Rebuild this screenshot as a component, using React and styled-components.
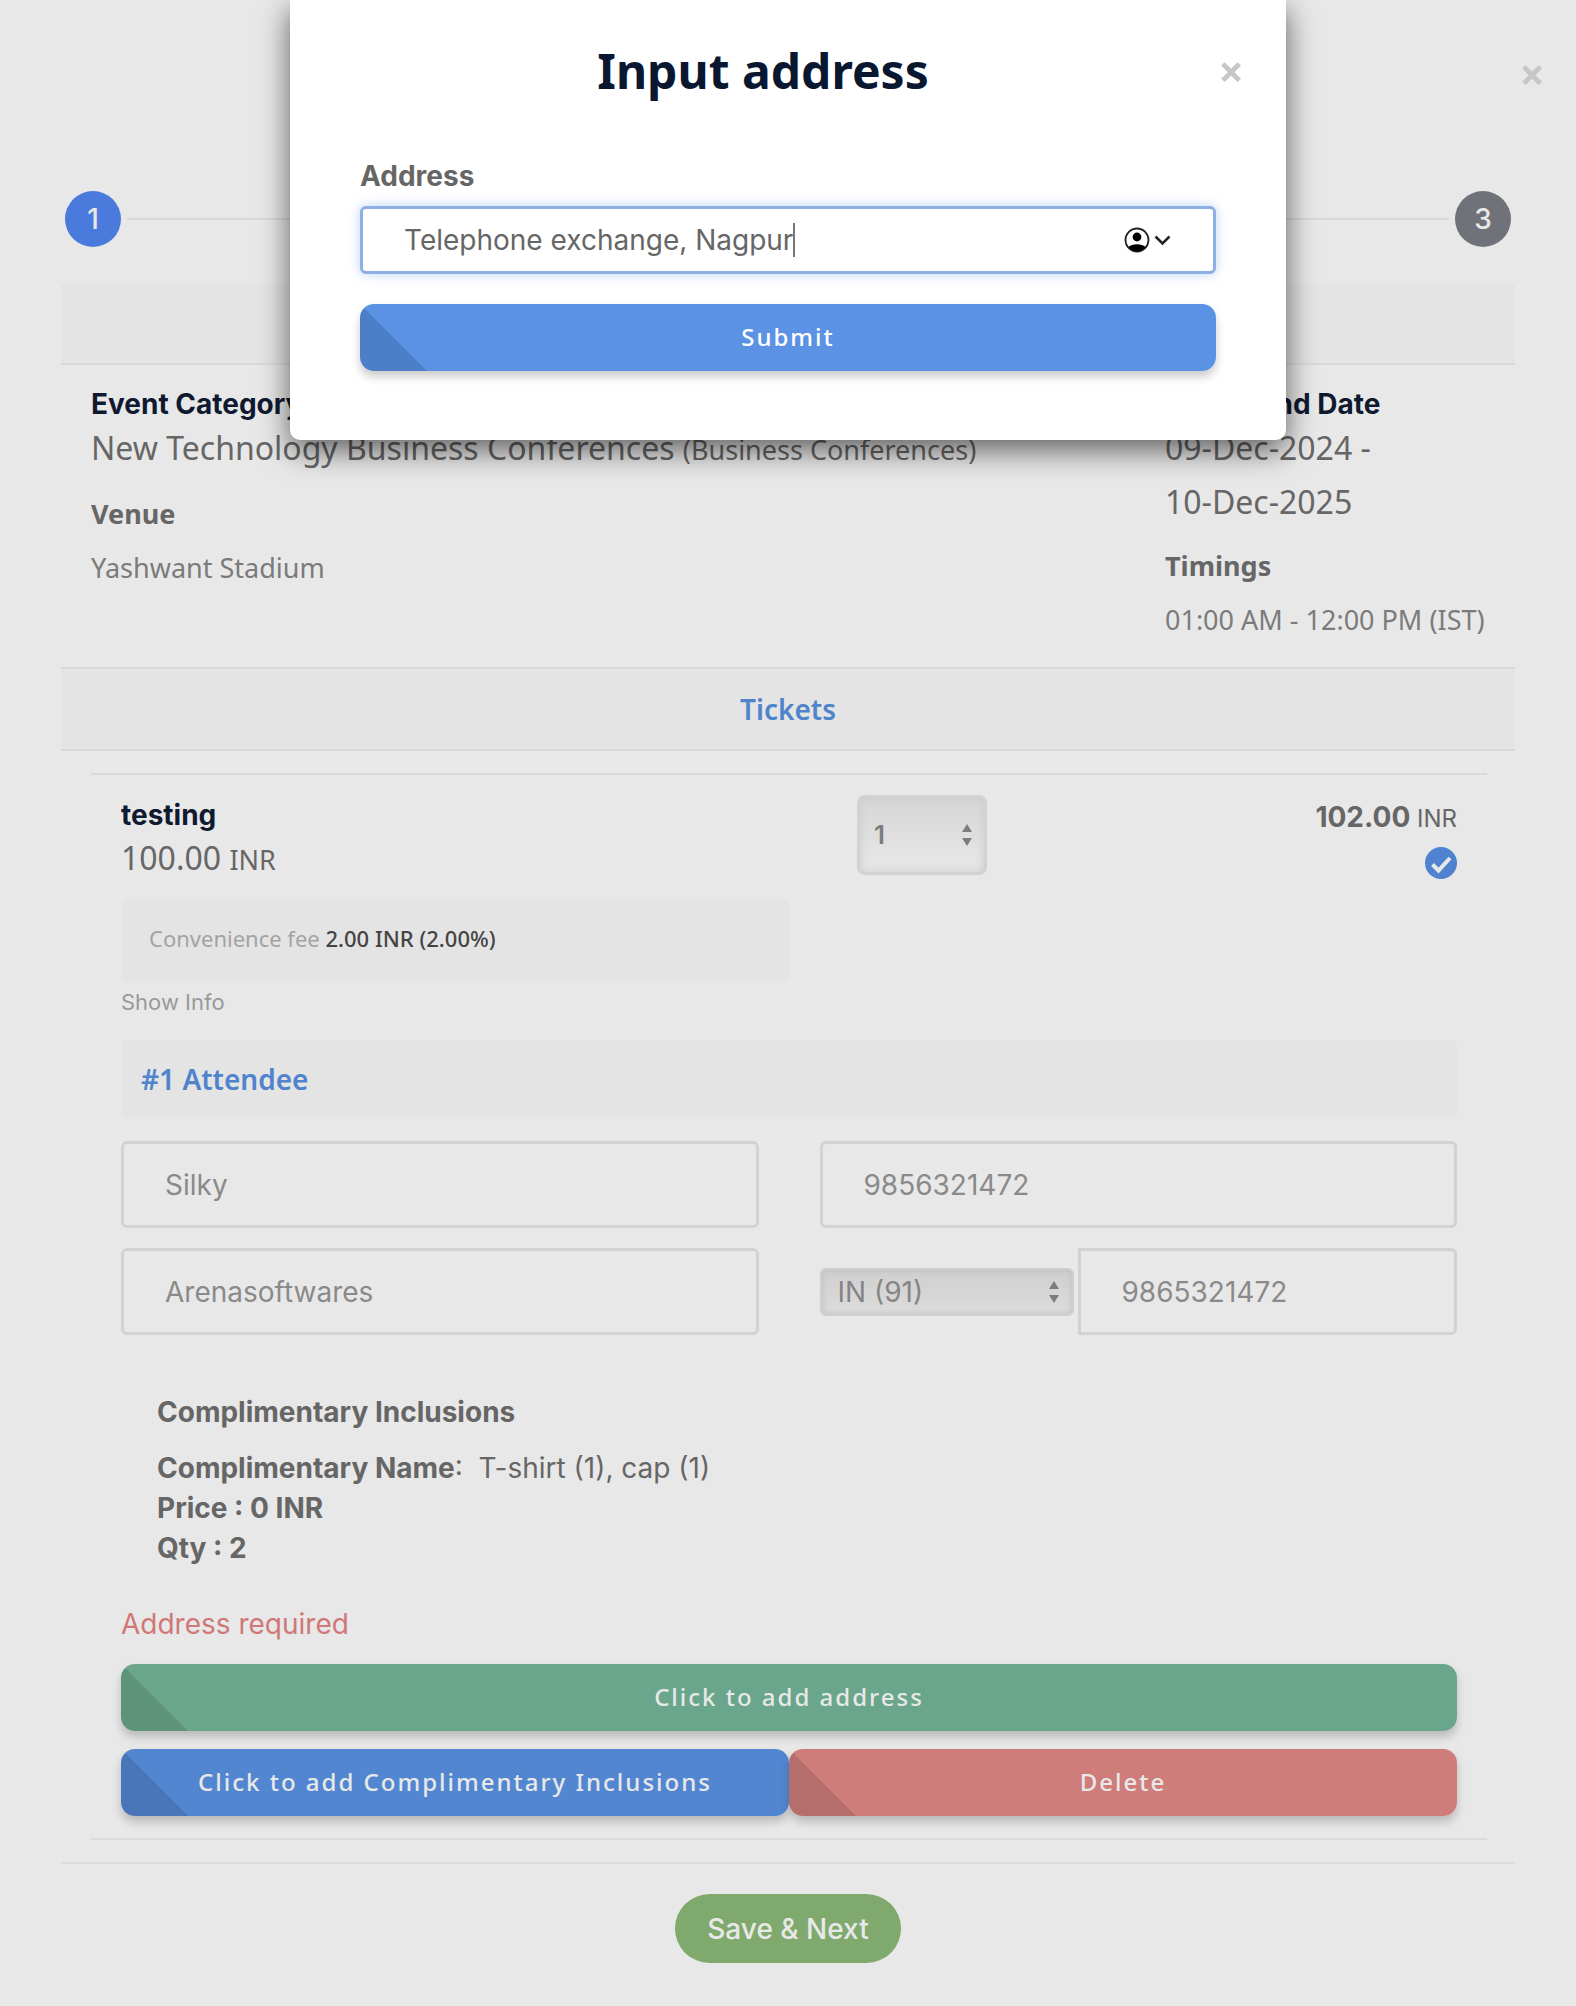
import React, { useState, useRef, useLayoutEffect } from 'react';
import styled, { createGlobalStyle } from 'styled-components';

export default function App() {
  const [address, setAddress] = useState('Telephone exchange, Nagpur');
  const [caretLeft, setCaretLeft] = useState(0);
  const inputRef = useRef(null);

  // keep the caret mark right behind the typed text
  useLayoutEffect(() => {
    const style = getComputedStyle(inputRef.current);
    const ctx = document.createElement('canvas').getContext('2d');
    ctx.font = style.font;
    const start = parseInt(style.paddingLeft) + parseInt(style.borderLeftWidth);
    setCaretLeft(Math.round(start + ctx.measureText(address).width));
  }, [address]);

  return (
    <>
      <GlobalStyle />
      <Page>
        <TopBar>
          <CloseButton aria-label="Close booking">×</CloseButton>
        </TopBar>

        <Steps>
          <Step $active>1</Step>
          <StepLine />
          <Step>3</Step>
        </Steps>

        <Card>
          <SectionBar $first />
          <EventInfo>
            <div>
              <InfoTitle>Event Category</InfoTitle>
              <InfoValue>
                New Technology Business Conferences{' '}
                <small>(Business Conferences)</small>
              </InfoValue>
              <InfoLabel>Venue</InfoLabel>
              <InfoText>Yashwant Stadium</InfoText>
            </div>
            <DateColumn>
              <InfoTitle>Start - End Date</InfoTitle>
              <InfoValue>
                09-Dec-2024 -<br />
                10-Dec-2025
              </InfoValue>
              <InfoLabel>Timings</InfoLabel>
              <InfoText>01:00 AM - 12:00 PM (IST)</InfoText>
            </DateColumn>
          </EventInfo>

          <SectionBar>Tickets</SectionBar>

          <Ticket>
            <TicketHead>
              <div>
                <TicketName>testing</TicketName>
                <TicketPrice>
                  100.00 <small>INR</small>
                </TicketPrice>
                <Fee>
                  Convenience fee <b>2.00 INR (2.00%)</b>
                </Fee>
                <ShowInfo href="#info">Show Info</ShowInfo>
              </div>
              <TicketSide>
                <QuantityWrap>
                  <QuantitySelect aria-label="Quantity" defaultValue="1">
                    <option>1</option>
                    <option>2</option>
                  </QuantitySelect>
                  <SelectArrows />
                </QuantityWrap>
                <Total>
                  <div>
                    <b>102.00</b> INR
                  </div>
                  <CheckIcon />
                </Total>
              </TicketSide>
            </TicketHead>

            <AttendeeBar>#1 Attendee</AttendeeBar>
            <Fields>
              <Input aria-label="Name" defaultValue="Silky" />
              <Input aria-label="Phone" defaultValue="9856321472" />
              <Input aria-label="Company" defaultValue="Arenasoftwares" />
              <PhoneGroup>
                <CodeWrap>
                  <CodeSelect aria-label="Country code" defaultValue="IN (91)">
                    <option>IN (91)</option>
                  </CodeSelect>
                  <SelectArrows />
                </CodeWrap>
                <Input aria-label="WhatsApp" defaultValue="9865321472" $joined />
              </PhoneGroup>
            </Fields>

            <Inclusions>
              <h4>Complimentary Inclusions</h4>
              <p>
                <b>Complimentary Name</b>:&nbsp; T-shirt (1), cap (1)
              </p>
              <p>
                <b>Price : 0 INR</b>
              </p>
              <p>
                <b>Qty : 2</b>
              </p>
            </Inclusions>

            <ErrorText>Address required</ErrorText>
            <Button $color="#69a68b" $corner="#5c937a">
              Click to add address
            </Button>
            <ButtonRow>
              <Button $color="#5386d1" $corner="#4876b8">
                Click to add Complimentary Inclusions
              </Button>
              <Button $color="#cf7d7b" $corner="#b56e6c">
                Delete
              </Button>
            </ButtonRow>
          </Ticket>
        </Card>

        <Footer>
          <SaveButton>Save &amp; Next</SaveButton>
        </Footer>
      </Page>

      <Modal role="dialog" aria-labelledby="modal-title">
        <ModalHeader>
          <ModalTitle id="modal-title">Input address</ModalTitle>
          <CloseButton aria-label="Close">×</CloseButton>
        </ModalHeader>
        <ModalBody>
          <Label htmlFor="address">Address</Label>
          <AddressWrap>
            <AddressInput
              id="address"
              ref={inputRef}
              autoFocus
              value={address}
              onChange={e => setAddress(e.target.value)}
            />
            <Caret style={{ left: caretLeft }} />
            <AutofillIcon />
          </AddressWrap>
          <Button $color="#5b92e3" $corner="#4d7fc8" $bright>
            Submit
          </Button>
        </ModalBody>
      </Modal>
    </>
  );
}

function SelectArrows() {
  return (
    <Arrows viewBox="0 0 12 24" aria-hidden="true">
      <path d="M6 1l5 8H1zM6 23l5-8H1z" fill="currentColor" />
    </Arrows>
  );
}

function CheckIcon() {
  return (
    <svg width="32" height="32" viewBox="0 0 32 32" aria-hidden="true">
      <circle cx="16" cy="16" r="16" fill="#4f83cf" />
      <path
        d="M7.500 17.500l6 6L25 11"
        fill="none"
        stroke="#e8e8e8"
        strokeWidth="4"
      />
    </svg>
  );
}

function AutofillIcon() {
  return (
    <Autofill viewBox="0 0 48 26" aria-hidden="true">
      <circle cx="13" cy="13" r="11.5" fill="none" stroke="#222" strokeWidth="1.8" />
      <circle cx="13" cy="10" r="4.4" fill="#000" />
      <path
        d="M4.500 20c2-2 5-2.800 8.500-2.800s6.500.8 8.500 2.800c-2 3-5 4.500-8.500 4.500S6.500 23 4.500 20z"
        fill="#000"
      />
      <path d="M31.500 9.500l7 7 7-7" fill="none" stroke="#222" strokeWidth="2.500" />
    </Autofill>
  );
}

const sans = `'Noto Sans', sans-serif`;
const inter = `Inter, sans-serif`;

const GlobalStyle = createGlobalStyle`
  * {
    box-sizing: border-box;
  }

  body {
    margin: 0;
    background: #e8e8e8;
    color: #666;
    font: 28px/40px ${inter};
  }

  h1, h2, h3, h4, p {
    margin: 0;
  }

  button, input, select {
    font: inherit;
  }
`;

const Page = styled.main`
  padding: 44px 61px;
`;

const TopBar = styled.header`
  display: flex;
  justify-content: flex-end;
  height: 147px;
  margin-right: -42px;
`;

const CloseButton = styled.button`
  width: 50px;
  height: 60px;
  padding: 0;
  border: none;
  background: none;
  color: #c6c6c6;
  font: bold 44px/60px ${sans};
`;

const Steps = styled.div`
  display: flex;
  align-items: center;
  gap: 6px;
  padding: 0 4px;
`;

const Step = styled.div`
  width: 56px;
  height: 56px;
  border-radius: 50%;
  background: ${props => (props.$active ? '#4a7bdc' : '#6f7379')};
  color: #e8e8e8;
  font-weight: 500;
  line-height: 56px;
  text-align: center;
`;

const StepLine = styled.div`
  flex: 1;
  height: 2px;
  background: #d8d8d8;
`;

const Card = styled.section`
  margin-top: 34px;
  border-bottom: 2px solid #dadada;
`;

const SectionBar = styled.h3`
  height: 84px;
  border-top: 2px solid ${props => (props.$first ? 'transparent' : '#dadada')};
  border-bottom: 2px solid #dadada;
  background: #e4e4e4;
  background-clip: padding-box;
  color: #4f83cc;
  font: 600 28px/80px ${sans};
  text-align: center;
`;

const EventInfo = styled.div`
  display: flex;
  justify-content: space-between;
  padding: 22px 28px 20px 30px;
`;

const DateColumn = styled.div`
  min-width: 322px;
`;

const InfoTitle = styled.h4`
  color: #0f1a30;
  font: bold 28px/34px ${inter};
`;

const InfoValue = styled.p`
  font: 32px/54px ${sans};

  small {
    font-size: 27px;
  }
`;

const InfoLabel = styled.h5`
  margin: 10px 0 0;
  font: bold 27px/54px ${sans};
`;

const InfoText = styled.p`
  color: #7b7b7b;
  font: 27px/54px ${sans};
`;

const Ticket = styled.article`
  margin: 22px 28px 22px 30px;
  padding: 20px 30px 22px;
  border-top: 2px solid #dadada;
  border-bottom: 2px solid #dadada;
`;

const TicketHead = styled.div`
  display: grid;
  grid-template-columns: 1fr 1fr;
`;

const TicketSide = styled.div`
  display: flex;
  align-items: flex-start;
  justify-content: space-between;
  padding-left: 68px;
`;

const TicketName = styled.h4`
  color: #0f1a30;
  font: bold 28px/40px ${inter};
`;

const TicketPrice = styled.p`
  font: 32px/46px ${sans};

  small {
    font-size: 27px;
  }
`;

const Fee = styled.p`
  height: 84px;
  margin: 16px 0 3px;
  padding: 0 28px;
  border-radius: 6px;
  background: #e4e4e4;
  color: #a3a3a3;
  font: 22px/78px ${sans};

  b {
    color: #444;
    font-weight: 500;
  }
`;

const ShowInfo = styled.a`
  display: block;
  color: #999;
  font-size: 22px;
  line-height: 32px;
  text-decoration: none;
`;

const QuantityWrap = styled.div`
  position: relative;
  width: 130px;
  height: 80px;
`;

const Total = styled.div`
  display: flex;
  flex-direction: column;
  align-items: flex-end;
  gap: 8px;
  padding-top: 2px;
  font-size: 24px;

  b {
    font-size: 28px;
  }
`;

const Arrows = styled.svg`
  position: absolute;
  top: 50%;
  right: 14px;
  width: 12px;
  height: 24px;
  margin-top: -12px;
  color: #7d7d7d;
  pointer-events: none;
`;

const QuantitySelect = styled.select`
  width: 100%;
  height: 100%;
  padding: 0 14px;
  border: 3px solid #d2d2d2;
  border-radius: 8px;
  appearance: none;
  background: linear-gradient(#d6d6d6, #e8e8e8);
  box-shadow: inset 0 0 8px #cacaca;
  color: #7d7d7d;
  font: 600 26px/32px ${inter};
`;

const AttendeeBar = styled.h4`
  height: 79px;
  margin-top: 22px;
  padding: 0 20px;
  border-radius: 6px;
  background: #e4e4e4;
  color: #4f83cc;
  font: 600 28px/79px ${sans};
`;

const Fields = styled.div`
  display: grid;
  grid-template-columns: 1fr 1fr;
  gap: 20px 61px;
  margin-top: 22px;
`;

const Input = styled.input`
  width: 100%;
  min-width: 0;
  height: 87px;
  padding: 0 41px;
  border: 3px solid #d2d2d2;
  border-radius: ${props => (props.$joined ? '0 6px 6px 0' : '6px')};
  background: transparent;
  color: #8a8a8a;
`;

const PhoneGroup = styled.div`
  display: flex;
  align-items: center;
  gap: 4px;
`;

const CodeWrap = styled.div`
  position: relative;
  flex: none;
  width: 254px;
`;

const CodeSelect = styled.select`
  display: block;
  width: 100%;
  height: 48px;
  padding: 0 16px;
  border: 2px solid #cfcfcf;
  border-radius: 6px;
  appearance: none;
  background: linear-gradient(#cfcfcf, #dcdcdc);
  box-shadow: inset 0 0 6px #bdbdbd;
  color: #858585;
`;

const Inclusions = styled.div`
  padding: 57px 36px 0;

  h4 {
    margin-bottom: 16px;
    font: bold 28px/40px ${inter};
  }
`;

const ErrorText = styled.p`
  margin: 36px 0 20px;
  color: #d07777;
`;

const Button = styled.button`
  display: block;
  width: 100%;
  height: 67px;
  padding: 0 0 2px;
  border: none;
  border-radius: 14px;
  background: linear-gradient(
    45deg,
    ${props => props.$corner} 47px,
    ${props => props.$color} 48px
  );
  box-shadow: 0 6px 10px rgba(0, 0, 0, 0.2);
  color: ${props => (props.$bright ? '#fff' : '#e8e8e8')};
  font: 500 24px/64px ${sans};
  letter-spacing: 2px;
`;

const ButtonRow = styled.div`
  display: flex;
  margin-top: 18px;
`;

const Footer = styled.footer`
  display: flex;
  justify-content: center;
  padding-top: 30px;
`;

const SaveButton = styled.button`
  height: 69px;
  padding: 0 32px;
  border: none;
  border-radius: 35px;
  background: #80aa6d;
  color: #e8e8e8;
  font-weight: 500;
`;

const Modal = styled.div`
  position: absolute;
  top: 0;
  left: 50%;
  width: 996px;
  max-width: 100%;
  padding: 36px 0 69px;
  border-radius: 0 0 10px 10px;
  background: #fff;
  box-shadow: 0 10px 30px rgba(0, 0, 0, 0.6);
  transform: translateX(-50%);
`;

const ModalHeader = styled.header`
  display: flex;
  align-items: center;
  padding: 0 30px;
`;

const ModalTitle = styled.h2`
  flex: 1;
  color: #0a1730;
  font: bold 48px/70px ${sans};
  text-align: center;
`;

const ModalBody = styled.div`
  padding: 50px 70px 0;
`;

const Label = styled.label`
  display: block;
  margin-bottom: 10px;
  font-weight: bold;
`;

const AddressWrap = styled.div`
  position: relative;
  margin-bottom: 30px;
`;

const AddressInput = styled(Input)`
  display: block;
  height: 68px;
  border-color: #8cb0e2;
  background: #fff;
  box-shadow: 0 0 12px rgba(91, 146, 227, 0.4);
  color: #666;
  caret-color: transparent;
  outline: none;
`;

const Caret = styled.span`
  position: absolute;
  top: 17px;
  width: 2px;
  height: 34px;
  background: #777;
  pointer-events: none;
`;

const Autofill = styled.svg`
  position: absolute;
  top: 21px;
  right: 44px;
  width: 48px;
  height: 26px;
`;
